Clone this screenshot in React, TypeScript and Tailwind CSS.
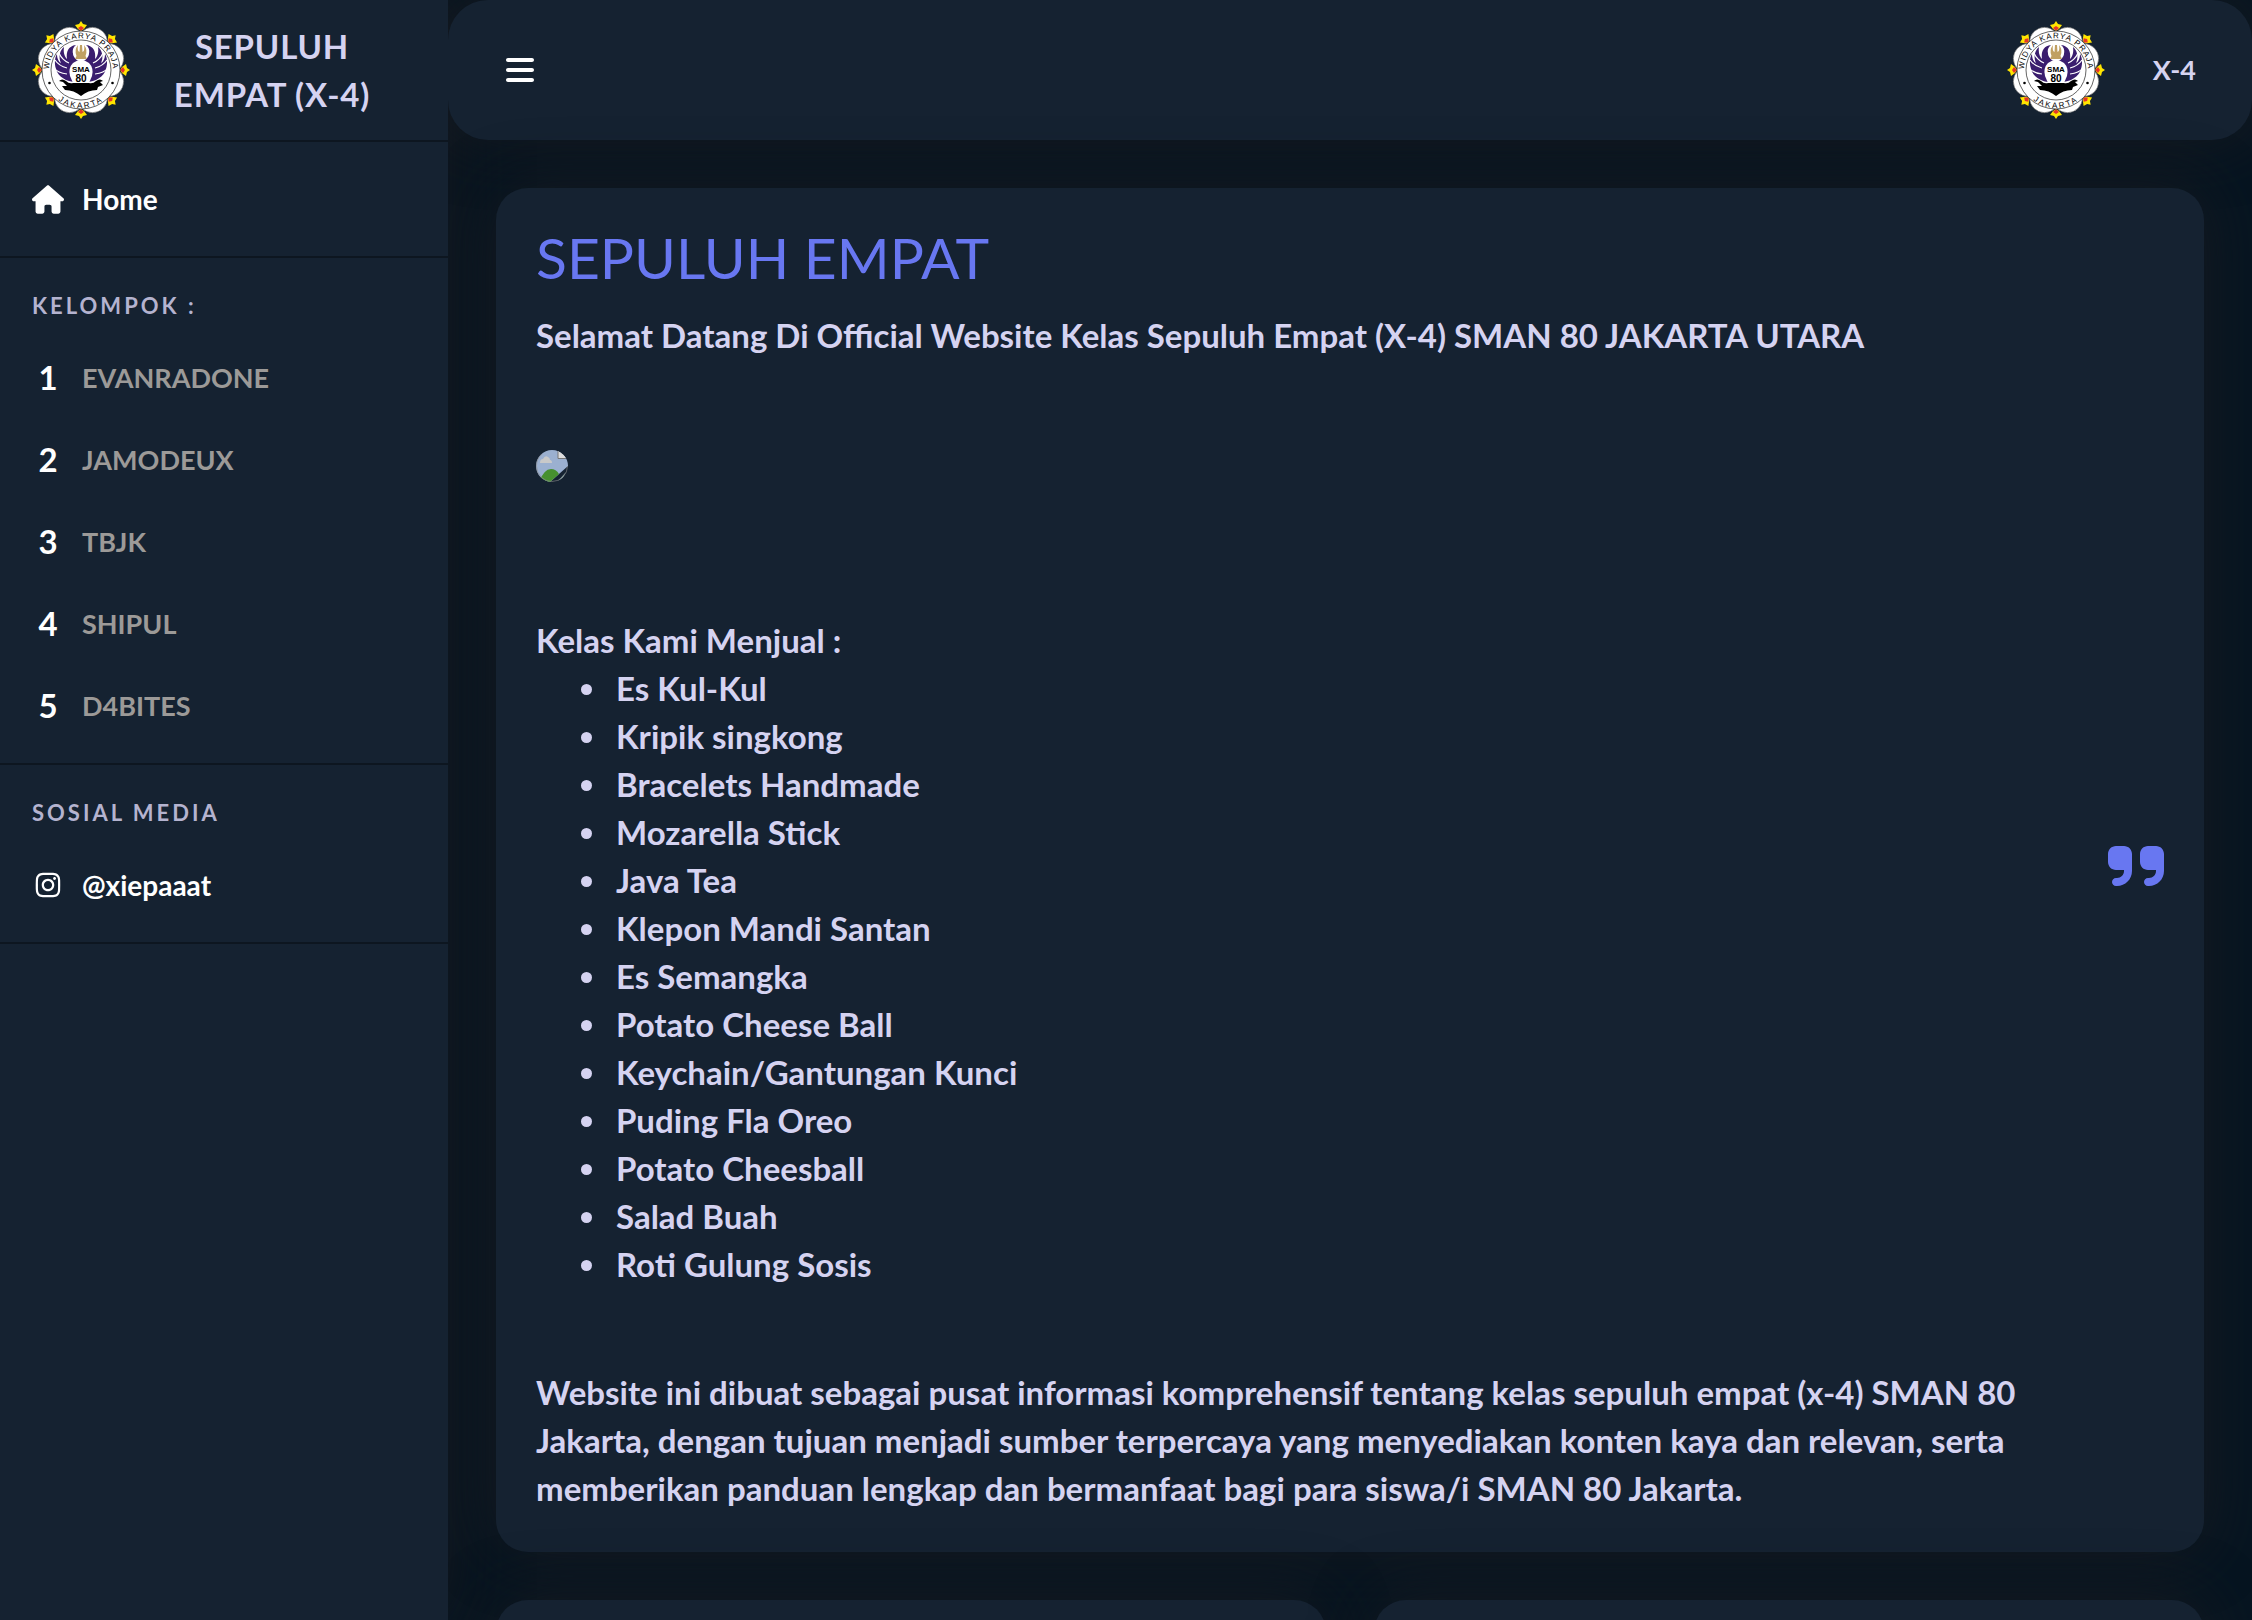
import { useId } from "react"
import { FaBars, FaHouse, FaInstagram, FaQuoteRight } from "react-icons/fa6"

const groups = ["EVANRADONE", "JAMODEUX", "TBJK", "SHIPUL", "D4BITES"]

const products = [
  "Es Kul-Kul",
  "Kripik singkong",
  "Bracelets Handmade",
  "Mozarella Stick",
  "Java Tea",
  "Klepon Mandi Santan",
  "Es Semangka",
  "Potato Cheese Ball",
  "Keychain/Gantungan Kunci",
  "Puding Fla Oreo",
  "Potato Cheesball",
  "Salad Buah",
  "Roti Gulung Sosis",
]

const wing =
  "M46 61 C36 62 26 56 24 48 C22 42 23 36 25 33 C25 38 27 41 29 42 C26 36 28 29 32 26 C31 32 33 36 35 38 C34 31 36 25 44 24 C39 28 40 34 45 39 L49 41 L49 61 Z"

function SchoolLogo() {
  const id = useId()

  return (
    <svg viewBox="0 0 98 98" className="size-[98px] shrink-0" role="img" aria-label="SMA 80 Jakarta">
      {/* Petals */}
      {[22.5, 67.5, 112.5, 157.5, 202.5, 247.5, 292.5, 337.5].map((angle) => (
        <circle
          key={angle}
          cx="49"
          cy="19"
          r="15"
          transform={`rotate(${angle} 49 49)`}
          fill="#fff"
          stroke="#555"
          strokeWidth="0.5"
        />
      ))}
      {/* Yellow tips between the petals */}
      {[0, 45, 90, 135, 180, 225, 270, 315].map((angle) => (
        <g key={angle} transform={`rotate(${angle} 49 49)`}>
          <path d="M49 0 L51 3 L55 4 L52 8 L49 10 L46 8 L43 4 L47 3 Z" fill="#ffe500" />
          <path d="M46 7 L49 5 L52 7 L49 10 Z" fill="#e5352b" />
        </g>
      ))}
      <circle cx="49" cy="49" r="39" fill="#fff" stroke="#222" strokeWidth="0.7" />
      <circle cx="49" cy="49" r="30" fill="none" stroke="#222" strokeWidth="0.7" />
      <path id={`${id}top`} d="M17.500 55 A32 32 0 1 1 80.500 55" fill="none" />
      <path id={`${id}bottom`} d="M14.500 64 A37.300 37.300 0 0 0 83.500 64" fill="none" />
      <g fill="#000" textAnchor="middle" className="font-['Liberation_Sans'] text-[8px]">
        <text className="tracking-[1px]">
          <textPath href={`#${id}top`} startOffset="50%">
            WIDYA KARYA PRAJA
          </textPath>
        </text>
        <text className="tracking-[2px]">
          <textPath href={`#${id}bottom`} startOffset="50%">
            JAKARTA
          </textPath>
        </text>
      </g>
      <circle cx="17.5" cy="62" r="1.3" />
      <circle cx="80.5" cy="62" r="1.3" />
      {/* Wings, crown and banner */}
      <path d={wing} fill="#3a1d6e" />
      <path d={wing} fill="#3a1d6e" transform="matrix(-1 0 0 1 98 0)" />
      <path
        d="M22 47 Q26 52 35 53 M23 39 Q27 45 35 47 M27 32 Q30 39 37 42 M76 47 Q72 52 63 53 M75 39 Q71 45 63 47 M71 32 Q68 39 61 42"
        fill="none"
        stroke="#fff"
        strokeWidth="1.2"
      />
      <ellipse cx="49" cy="32" rx="8" ry="8" fill="#fff" />
      <path
        d="M43 38 L44.5 35 Q42 29 46 24 Q45 30 47.5 31 L48 24 H50 L50.500 31 Q53 30 52 24 Q56 29 53.500 35 L55 38 Z"
        fill="#c0a062"
      />
      <path d="M41 42 Q49 36 57 42 Q62 47 60 55 L57 62 H41 L38 55 Q36 47 41 42 Z" fill="#fff" />
      <path
        d="M27 60 Q30 57 34 60 Q37 63 41 62 H57 Q61 63 64 60 Q68 57 71 60 L68 61 L71 64 L66 66 L65 69 Q56 69 49 75 Q42 69 33 69 L30 65 L35 65 L31 61 Z"
        fill="#000"
      />
      <g textAnchor="middle" className="font-['Liberation_Sans'] font-bold">
        <text x="49" y="51" className="text-[8px]">
          SMA
        </text>
        <text x="49" y="61" className="text-[10px]">
          80
        </text>
      </g>
    </svg>
  )
}

/* Placeholder for a photo that has not loaded */
function MissingPhoto() {
  return (
    <svg viewBox="0 0 32 32" className="size-8" role="img" aria-label="Foto kelas">
      <defs>
        <clipPath id="photo-round">
          <circle cx="16" cy="16" r="16" />
        </clipPath>
      </defs>
      <g clipPath="url(#photo-round)">
        <path d="M0 0 H22 L32 9 V16 L14 32 H0 Z" fill="#9bb0d0" />
        <path d="M4 13 Q4 9 7 9 Q9 5 12 7 Q14 8 14 10 Q16 10 16 13 Z" fill="#c9c9c9" />
        <path d="M3 32 Q8 19 15 19 Q20 19 23 24 L14 32 Z" fill="#46902f" />
        <path d="M22 0 V8 H32 V0 Z" fill="#ddd" />
        <path d="M22 0 V8.500 H32" fill="none" stroke="#777" />
        <path d="M30 22 L22 31 L26 30 Z" fill="#7f9a9c" />
      </g>
      <circle cx="16" cy="16" r="15.500" fill="none" stroke="#8c8c8c" strokeWidth="0.6" strokeDasharray="62 40" />
    </svg>
  )
}

function SectionLabel({ children }: { children: string }) {
  return (
    <h3 className="flex h-[63px] items-center text-[22px] font-bold tracking-[3px] text-[#b4b3cf]">{children}</h3>
  )
}

function Sidebar() {
  return (
    <aside className="w-[448px] shrink-0 bg-[#152231] shadow-[0_0_60px_rgba(24,27,32,0.9)]">
      <div className="flex h-[142px] items-center gap-4 border-b-2 border-[#0d1620] pl-8">
        <SchoolLogo />
        <div className="w-[252px] text-center text-[33px] leading-[48px] font-bold tracking-wide text-[#d5d3f1]">
          SEPULUH EMPAT (X-4)
        </div>
      </div>

      <nav className="text-[28px] font-bold">
        <div className="border-b-2 border-[#0d1620] px-8 py-4">
          <a href="#" className="flex h-[82px] items-center gap-[18px] text-white">
            <FaHouse className="h-[29px] w-8" />
            Home
          </a>
        </div>

        <div className="border-b-2 border-[#0d1620] px-8 py-4">
          <SectionLabel>KELOMPOK :</SectionLabel>
          {groups.map((group, index) => (
            <a key={group} href="#" className="flex h-[82px] items-center gap-[18px] text-[27px] text-[#9c9a98]">
              <span className="w-8 text-center text-[33px] text-white">{index + 1}</span>
              {group}
            </a>
          ))}
        </div>

        <div className="border-b-2 border-[#0d1620] px-8 py-4">
          <SectionLabel>SOSIAL MEDIA</SectionLabel>
          <a href="#" className="flex h-[82px] items-center gap-[18px] text-white">
            <FaInstagram className="h-7 w-8" />
            @xiepaaat
          </a>
        </div>
      </nav>
    </aside>
  )
}

export default function App() {
  return (
    <div className="flex h-screen overflow-hidden bg-[#071521] font-[Lato,sans-serif] text-[#d5d3f1]">
      <Sidebar />

      <div className="min-w-0 flex-1 overflow-hidden">
        <header className="flex h-[140px] items-center justify-between rounded-[40px] bg-[#152231] px-14 shadow-[0_0_60px_rgba(24,27,32,0.9)]">
          <button type="button" aria-label="Menu" className="text-white">
            <FaBars className="size-8" />
          </button>
          <div className="flex items-center gap-12">
            <SchoolLogo />
            <span className="text-[27px] font-bold">X-4</span>
          </div>
        </header>

        <main className="grid grid-cols-2 gap-12 p-12">
          <section className="col-span-2 flex items-center justify-between rounded-[32px] bg-[#152231] p-10 shadow-[0_0_60px_rgba(24,27,32,0.9)]">
            <div className="max-w-[1500px] text-[33px] leading-[48px] font-bold">
              <h1 className="mb-6 text-[57px] leading-[59px] font-normal text-[#6877f1]">SEPULUH EMPAT</h1>
              <p>Selamat Datang Di Official Website Kelas Sepuluh Empat (X-4) SMAN 80 JAKARTA UTARA</p>
              <div className="mt-[91px] mb-[134px]">
                <MissingPhoto />
              </div>
              <p>Kelas Kami Menjual :</p>
              <ul className="mb-20 list-disc pl-[74px]">
                {products.map((product) => (
                  <li key={product} className="pl-1.5">
                    {product}
                  </li>
                ))}
              </ul>
              <p>
                Website ini dibuat sebagai pusat informasi komprehensif tentang kelas sepuluh empat (x-4) SMAN 80
                Jakarta, dengan tujuan menjadi sumber terpercaya yang menyediakan konten kaya dan relevan, serta
                memberikan panduan lengkap dan bermanfaat bagi para siswa/i SMAN 80 Jakarta.
              </p>
            </div>
            <FaQuoteRight className="mb-2 h-16 w-14 text-[#6877f1]" />
          </section>

          <section className="h-80 rounded-[32px] bg-[#152231] shadow-[0_0_60px_rgba(24,27,32,0.9)]" />
          <section className="h-80 rounded-[32px] bg-[#152231] shadow-[0_0_60px_rgba(24,27,32,0.9)]" />
        </main>
      </div>
    </div>
  )
}
